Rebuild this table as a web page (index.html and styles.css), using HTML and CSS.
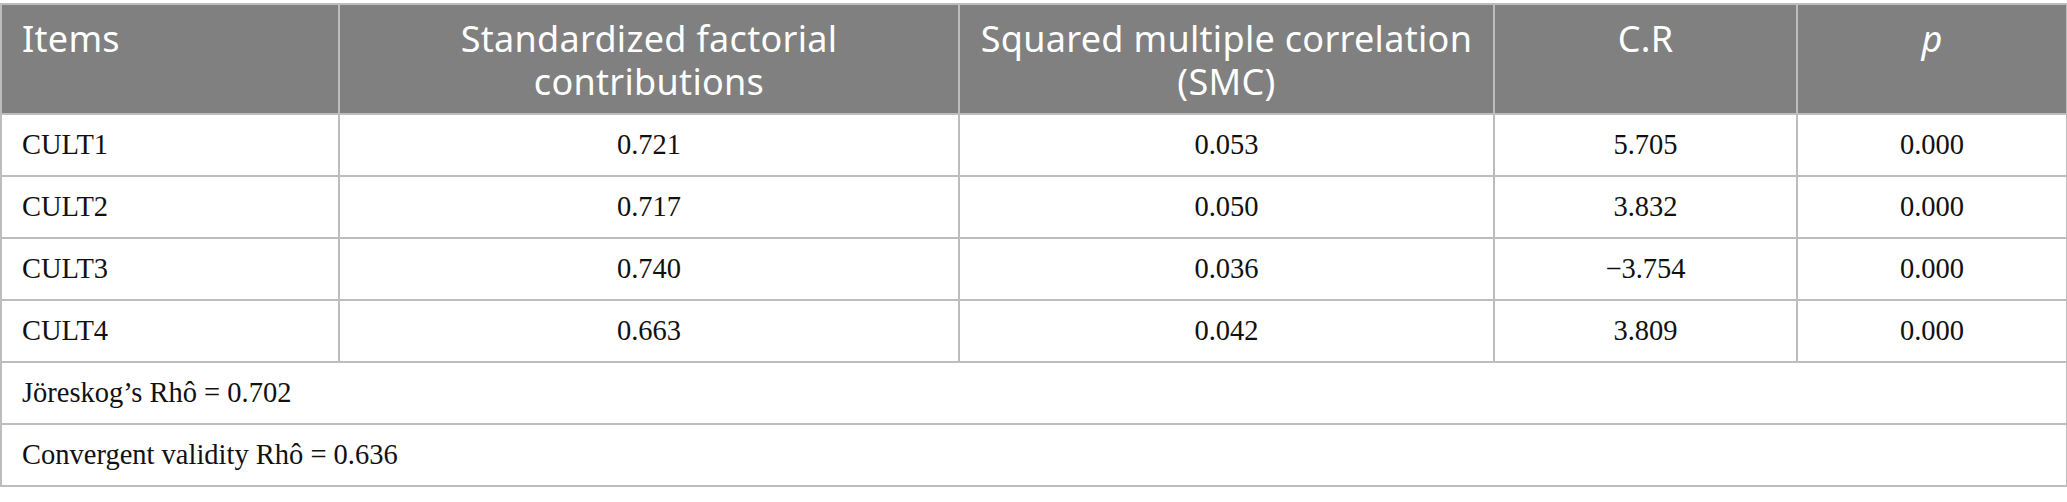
FILE: index.html
```html
<!DOCTYPE html>
<html lang="en">
<head>
<meta charset="utf-8">
<title>Table</title>
<link rel="stylesheet" href="styles.css">
</head>
<body>
<table class="data-table">
  <colgroup>
    <col class="c1"><col class="c2"><col class="c3"><col class="c4"><col class="c5">
  </colgroup>
  <thead>
    <tr>
      <th class="left">Items</th>
      <th>Standardized factorial contributions</th>
      <th>Squared multiple correlation (SMC)</th>
      <th>C.R</th>
      <th><i>p</i></th>
    </tr>
  </thead>
  <tbody>
    <tr><td class="left">CULT1</td><td>0.721</td><td>0.053</td><td>5.705</td><td>0.000</td></tr>
    <tr><td class="left">CULT2</td><td>0.717</td><td>0.050</td><td>3.832</td><td>0.000</td></tr>
    <tr><td class="left">CULT3</td><td>0.740</td><td>0.036</td><td>−3.754</td><td>0.000</td></tr>
    <tr><td class="left">CULT4</td><td>0.663</td><td>0.042</td><td>3.809</td><td>0.000</td></tr>
    <tr><td class="left" colspan="5">Jöreskog’s Rhô = 0.702</td></tr>
    <tr><td class="left" colspan="5">Convergent validity Rhô = 0.636</td></tr>
  </tbody>
</table>
</body>
</html>
```

FILE: styles.css
```css
html, body {
  margin: 0;
  padding: 0;
  background: #ffffff;
}
body {
  padding-top: 3px;
}
.data-table {
  border-collapse: collapse;
  table-layout: fixed;
  width: 2066px;
}
.c1 { width: 338px; }
.c2 { width: 620px; }
.c3 { width: 535px; }
.c4 { width: 303px; }
.c5 { width: 270px; }

.data-table th,
.data-table td {
  border: 2px solid #bdbdbd;
  text-align: center;
}
.data-table th {
  background: #7f807f;
  color: #ffffff;
  font-family: "Noto Sans", "Open Sans", sans-serif;
  font-weight: 400;
  font-size: 36px;
  letter-spacing: 0.3px;
  line-height: 43px;
  vertical-align: top;
  height: 110px;
  box-sizing: border-box;
  padding: 12px 20px 0;
}
.data-table td {
  font-family: "Liberation Serif", "Times New Roman", serif;
  font-size: 28.5px;
  color: #111111;
  height: 62px;
  box-sizing: border-box;
  padding: 0 20px;
  vertical-align: middle;
}
.data-table .left {
  text-align: left;
}
```
